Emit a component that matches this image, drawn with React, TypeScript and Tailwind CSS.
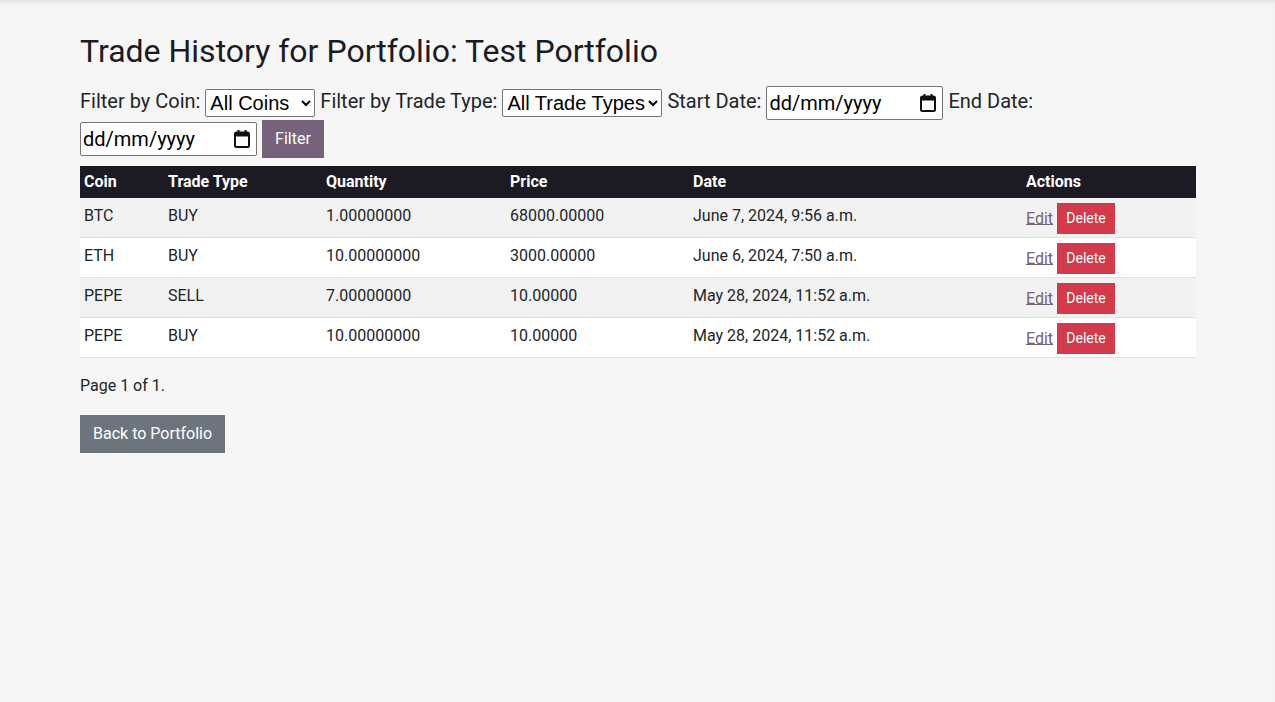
import React from "react";

type Trade = {
  coin: string;
  type: string;
  quantity: string;
  price: string;
  date: string;
};

const trades: Trade[] = [
  { coin: "BTC", type: "BUY", quantity: "1.00000000", price: "68000.00000", date: "June 7, 2024, 9:56 a.m." },
  { coin: "ETH", type: "BUY", quantity: "10.00000000", price: "3000.00000", date: "June 6, 2024, 7:50 a.m." },
  { coin: "PEPE", type: "SELL", quantity: "7.00000000", price: "10.00000", date: "May 28, 2024, 11:52 a.m." },
  { coin: "PEPE", type: "BUY", quantity: "10.00000000", price: "10.00000", date: "May 28, 2024, 11:52 a.m." },
];

function CalendarIcon() {
  return (
    <svg width="18" height="20" viewBox="0 0 18 20" className="shrink-0">
      <rect x="2" y="3.5" width="14" height="14.5" rx="1.5" fill="none" stroke="#111" strokeWidth="2" />
      <rect x="2" y="3.5" width="14" height="4" fill="#111" />
      <rect x="4.5" y="1" width="2" height="3" fill="#111" />
      <rect x="11.5" y="1" width="2" height="3" fill="#111" />
    </svg>
  );
}

function DateBox() {
  return (
    <span className="inline-flex h-[34px] w-[177px] items-center justify-between rounded-[2px] border border-[#767676] bg-white pl-[2px] pr-[5px] align-middle font-['Roboto',sans-serif] text-[20px] leading-[24px] text-black">
      dd/mm/yyyy
      <CalendarIcon />
    </span>
  );
}

export default function App() {
  return (
    <div className="min-h-[702px] bg-[#f6f6f6] font-['Roboto',sans-serif] text-[#212529] shadow-[inset_0_5px_6px_-4px_rgba(0,0,0,0.12)]">
      <div className="mx-[80px] pt-[30px]">
        <h1 className="text-[32px] leading-[43px] text-[#1c1a22]">Trade History for Portfolio: Test Portfolio</h1>

        <form className="mt-[11px] text-[20px] leading-[34px]" onSubmit={(e) => e.preventDefault()}>
          <label>Filter by Coin:</label>{" "}
          <select className="h-[28px] w-[110px] rounded-[2px] border border-[#767676] bg-white align-middle font-['Liberation_Sans',Arial,sans-serif] text-[20px] text-black">
            <option>All Coins</option>
          </select>{" "}
          <label>Filter by Trade Type:</label>{" "}
          <select className="h-[28px] w-[160px] rounded-[2px] border border-[#767676] bg-white align-middle font-['Liberation_Sans',Arial,sans-serif] text-[20px] text-black">
            <option>All Trade Types</option>
          </select>{" "}
          <label>Start Date:</label> <DateBox /> <label>End Date:</label>{" "}
          <DateBox />{" "}
          <button className="h-[38px] w-[62px] bg-[#76627a] align-middle text-[16px] leading-[20px] text-white">Filter</button>
        </form>

        <table className="mt-[8px] w-[1116px] border-collapse text-left text-[16px]">
          <thead>
            <tr className="bg-[#1c1a22] text-white">
              <th className="w-[84px] px-[4px] py-[6px] font-bold leading-[20px]">Coin</th>
              <th className="w-[158px] px-[4px] py-[6px] font-bold leading-[20px]">Trade Type</th>
              <th className="w-[184px] px-[4px] py-[6px] font-bold leading-[20px]">Quantity</th>
              <th className="w-[183px] px-[4px] py-[6px] font-bold leading-[20px]">Price</th>
              <th className="w-[333px] px-[4px] py-[6px] font-bold leading-[20px]">Date</th>
              <th className="px-[4px] py-[6px] font-bold leading-[20px]">Actions</th>
            </tr>
          </thead>
          <tbody>
            {trades.map((t, i) => (
              <tr key={i} className={`border-b border-[#dee2e6] ${i % 2 === 0 ? "bg-[#f2f2f2]" : "bg-white"}`}>
                <td className="px-[4px] pt-[6px] pb-[4px] align-top leading-[24px]">{t.coin}</td>
                <td className="px-[4px] pt-[6px] pb-[4px] align-top leading-[24px]">{t.type}</td>
                <td className="px-[4px] pt-[6px] pb-[4px] align-top leading-[24px]">{t.quantity}</td>
                <td className="px-[4px] pt-[6px] pb-[4px] align-top leading-[24px]">{t.price}</td>
                <td className="px-[4px] pt-[6px] pb-[4px] align-top leading-[24px]">{t.date}</td>
                <td className="px-[4px] pt-[5px] pb-[3px] align-top leading-[24px]">
                  <a href="#" className="text-[#76627a] underline">Edit</a>{" "}
                  <button className="h-[31px] w-[58px] bg-[#d33a4b] text-[14px] text-white">Delete</button>
                </td>
              </tr>
            ))}
          </tbody>
        </table>

        <p className="mt-[16px] text-[16px] leading-[24px]">Page 1 of 1.</p>

        <button className="mt-[17px] h-[38px] bg-[#6c757d] px-[13px] text-[16px] leading-[24px] text-white">Back to Portfolio</button>
      </div>
    </div>
  );
}
